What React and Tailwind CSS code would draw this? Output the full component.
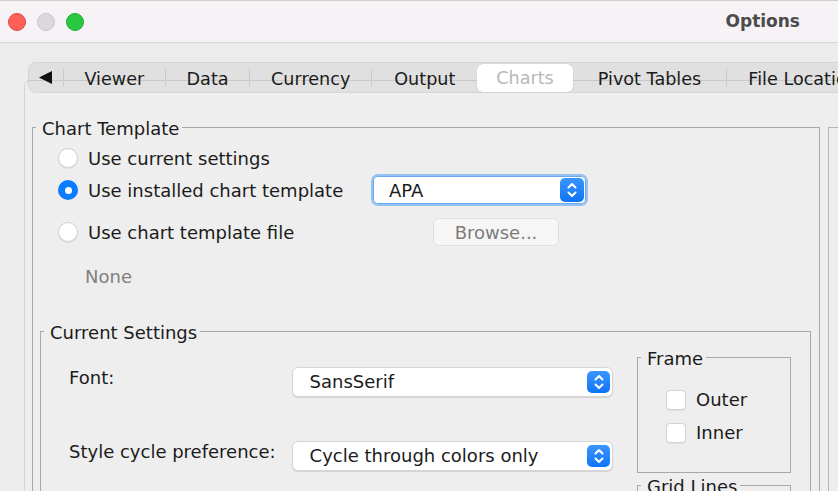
import React from "react";

const Stepper = ({ className = "" }) => (
  <div className={`flex items-center justify-center rounded-[5px] bg-gradient-to-b from-[#3a95ff] to-[#0a74f5] ${className}`}>
    <svg width="14" height="18" viewBox="0 0 14 18" fill="none" stroke="white" strokeWidth="2" strokeLinecap="round" strokeLinejoin="round">
      <path d="M3.5 6.5 L7 3 L10.5 6.5" />
      <path d="M3.5 11.5 L7 15 L10.5 11.5" />
    </svg>
  </div>
);

const Radio = ({ on }) =>
  on ? (
    <span className="flex h-[20px] w-[20px] shrink-0 items-center justify-center rounded-full bg-[#0b7bff]">
      <span className="h-[7px] w-[7px] rounded-full bg-white" />
    </span>
  ) : (
    <span className="h-[20px] w-[20px] shrink-0 rounded-full border border-[#d0d0d0] bg-white shadow-[0_1px_1px_rgba(0,0,0,0.08)]" />
  );

const Check = ({ label, className = "" }) => (
  <div className={`flex h-[20px] items-center pl-[28px] ${className}`}>
    <span className="h-[20px] w-[20px] rounded-[4px] border border-[#d2d2d2] bg-white shadow-[0_1px_1px_rgba(0,0,0,0.06)]" />
    <span className="ml-[10px] leading-[20px]">{label}</span>
  </div>
);

const Group = ({ title, className = "", children }) => (
  <fieldset className={`border border-[#a8a8a8] ${className}`}>
    <legend className="ml-[3px] pl-[6px] pr-[3px] leading-[20px]">
      <span className="relative top-[2px]">{title}</span>
    </legend>
    {children}
  </fieldset>
);

const Select = ({ value }) => (
  <div className="flex h-[30px] w-[322px] items-center rounded-[6px] border border-[#d6d6d6] bg-white shadow-[0_1px_1px_rgba(0,0,0,0.12)]">
    <span className="flex-1 pl-[17px] leading-[20px]">{value}</span>
    <Stepper className="mr-[2px] h-[22px] w-[23px]" />
  </div>
);

const tabs = [
  { label: "Viewer", w: "w-[102px]" },
  { label: "Data", w: "w-[84px]" },
  { label: "Currency", w: "w-[122px]" },
];

const Sep = () => <span className="h-[17px] w-px bg-[#c9c9c9]" />;

export default function App() {
  return (
    <div className="flex h-[491px] w-[838px] flex-col overflow-hidden bg-[#ececec] font-['DejaVu_Sans',sans-serif] text-[18px] text-[#1b1b1b]">
      {/* title bar */}
      <div className="flex h-[43px] shrink-0 items-center border-b border-t border-b-[#d6d6d6] border-t-[#cfcfcf] bg-[#f6f2f5] pl-[8px]">
        <span className="h-[18px] w-[18px] rounded-full border border-[#e2463f] bg-[#fe5f57]" />
        <span className="ml-[11px] h-[18px] w-[18px] rounded-full border border-[#c9c5c9] bg-[#dcd8dc]" />
        <span className="ml-[11px] h-[18px] w-[18px] rounded-full border border-[#1fae35] bg-[#28c840]" />
        <span className="ml-auto mr-[38px] text-[17px] font-bold text-[#4b4b4b]">Options</span>
      </div>

      {/* tab strip */}
      <div className="relative z-10 ml-[28px] mt-[19px] flex h-[31px] w-[840px] shrink-0 items-center rounded-[8px] border border-black/5 bg-black/[0.05] text-[17.6px]">
        <span className="flex w-[34px] justify-center">
          <svg width="15" height="15" viewBox="0 0 15 15">
            <polygon points="1,7.5 14,1 14,14" fill="#111" />
          </svg>
        </span>
        {tabs.map((t) => (
          <React.Fragment key={t.label}>
            <Sep />
            <span className={`${t.w} pt-[2px] text-center leading-[20px]`}>{t.label}</span>
          </React.Fragment>
        ))}
        <Sep />
        <span className="w-[106px] pt-[2px] text-center leading-[20px]">Output</span>
        <span className="flex h-[28px] w-[96px] items-center justify-center rounded-[6px] bg-white pt-[2px] text-[#b8b8b8] shadow-[0_0_1px_rgba(0,0,0,0.25)]">
          Charts
        </span>
        <span className="w-[155px] pt-[2px] text-center leading-[20px]">Pivot Tables</span>
        <Sep />
        <span className="whitespace-nowrap pl-[21px] pt-[2px] leading-[20px]">File Locations</span>
      </div>

      {/* panel */}
      <div className="-mt-[13px] ml-[24px] flex flex-1 gap-[8px] rounded-tl-[6px] border-l border-t border-[#d4d4d4] bg-[#eeeeee] pl-[7px] pt-[36px]">
        <Group title="Chart Template" className="h-[420px] w-[788px] shrink-0">
          <div className="mt-[9px] flex h-[24px] items-center pl-[25px]">
            <Radio />
            <span className="ml-[10px]">Use current settings</span>
          </div>
          <div className="mt-[4px] flex h-[32px] items-center pl-[25px]">
            <Radio on />
            <span className="ml-[10px] w-[283px]">Use installed chart template</span>
            <div className="flex h-[32px] w-[217px] items-center rounded-[7px] border-2 border-[#93c1f4] bg-white shadow-[inset_0_0_0_1px_#6aa8ee]">
              <span className="flex-1 pl-[16px]">APA</span>
              <Stepper className="mr-[2px] h-[24px] w-[24px]" />
            </div>
          </div>
          <div className="mt-[12px] flex h-[28px] items-center pl-[25px]">
            <Radio />
            <span className="ml-[10px] w-[283px]">Use chart template file</span>
            <span className="ml-[62px] flex h-[28px] w-[126px] items-center justify-center rounded-[6px] border border-[#e0e0e0] bg-[#f6f6f6] text-[#7d7d7d]">
              Browse...
            </span>
          </div>
          <div className="mt-[21px] pl-[52px] leading-[20px] text-[#808080]">None</div>

          <Group title="Current Settings" className="ml-[7px] mr-[8px] mt-[34px] h-[200px]">
            <div className="flex pl-[28px]">
              <div className="w-[544px]">
                <div className="mt-[26px] flex h-[30px]">
                  <span className="mt-[1px] w-[223px] leading-[20px]">Font:</span>
                  <Select value="SansSerif" />
                </div>
                <div className="mt-[44px] flex h-[30px]">
                  <span className="mt-[1px] w-[223px] leading-[20px]">Style cycle preference:</span>
                  <Select value="Cycle through colors only" />
                </div>
              </div>
              <div className="ml-[24px] w-[154px]">
                <Group title="Frame" className="mt-[6px] h-[126px]">
                  <Check label="Outer" className="mt-[23px]" />
                  <Check label="Inner" className="mt-[13px]" />
                </Group>
                <Group title="Grid Lines" className="mt-[2px] h-[60px]" />
              </div>
            </div>
          </Group>
        </Group>
        <div className="mt-[10px] h-[400px] flex-1 border-l border-t border-[#b4b4b4]" />
      </div>
    </div>
  );
}
